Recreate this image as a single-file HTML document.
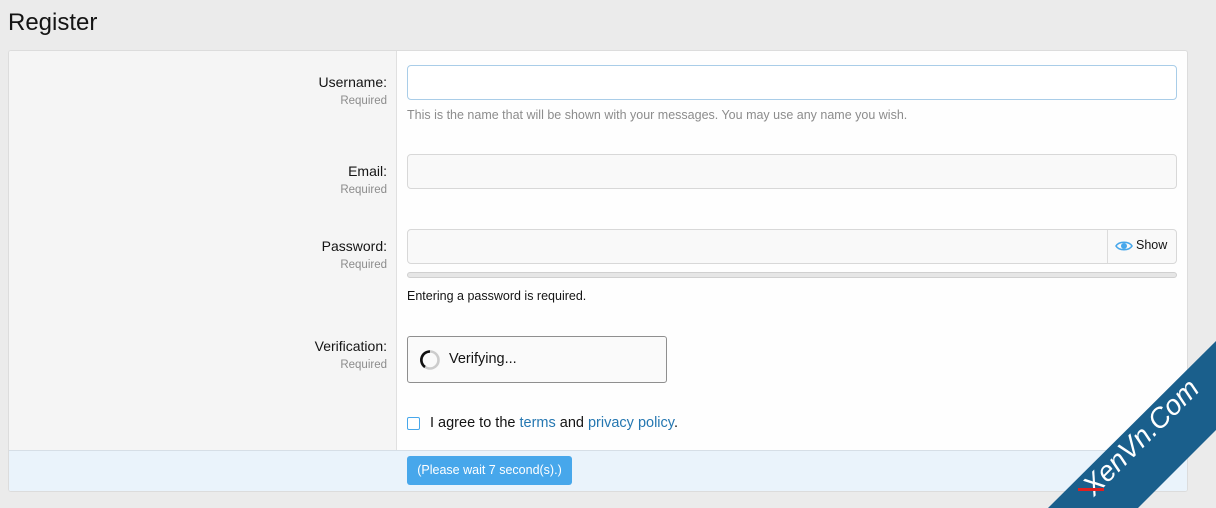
<!DOCTYPE html>
<html><head><meta charset="utf-8"><style>
*{box-sizing:border-box;margin:0;padding:0}
body{width:1216px;height:508px;background:#ebebeb;font-family:"Liberation Sans",sans-serif;position:relative;overflow:hidden;color:#141414}
.a{position:absolute}
h1{position:absolute;left:8px;top:9px;font-weight:400;font-size:24px;color:#141414}
.blk{left:8px;top:50px;width:1180px;height:442px;background:#fefefe;border:1px solid #dcdcdc;border-radius:3px;overflow:hidden}
.left{left:0;top:0;width:388px;height:399px;background:#f5f5f5;border-right:1px solid #e0e0e0}
.foot{left:0;top:399px;width:1180px;height:42px;background:#eaf3fb;border-top:1px solid #d6dee6}
.lbl{right:829px;text-align:right;font-size:14px;color:#141414;width:300px}
.req{right:829px;text-align:right;font-size:11.5px;color:#8c8c8c;width:300px}
.inp{left:407px;width:770px;height:35px;border:1px solid #d8d8d8;border-radius:4px;background:#f9f9f9}
.hint{font-size:12.5px;color:#8c8c8c}
a{color:#2577b1;text-decoration:none}
</style></head><body>
<h1>Register</h1>
<div class="a blk"><div class="a left"></div><div class="a foot"></div></div>

<div class="a lbl" style="top:74px">Username:</div>
<div class="a req" style="top:95px">Required</div>
<div class="a inp" style="top:65px;background:#fff;border-color:#a9cde8"></div>
<div class="a hint" style="left:407px;top:108px">This is the name that will be shown with your messages. You may use any name you wish.</div>

<div class="a lbl" style="top:163px">Email:</div>
<div class="a req" style="top:184px">Required</div>
<div class="a inp" style="top:154px"></div>

<div class="a lbl" style="top:238px">Password:</div>
<div class="a req" style="top:259px">Required</div>
<div class="a inp" style="top:229px"></div>
<div class="a" style="left:1107px;top:230px;width:1px;height:33px;background:#dcdcdc"></div>
<svg class="a" style="left:1115px;top:239px" width="18" height="14" viewBox="0 0 18 14"><path d="M1 7C4 2 14 2 17 7C14 12 4 12 1 7Z" fill="none" stroke="#47a7eb" stroke-width="1.6"/><circle cx="9" cy="7" r="3" fill="#47a7eb"/></svg>
<div class="a" style="left:1136px;top:238px;font-size:12.5px">Show</div>
<div class="a" style="left:407px;top:272px;width:770px;height:6px;border:1px solid #d0d0d0;border-radius:3px;background:#e6e6e6"></div>
<div class="a" style="left:407px;top:289px;font-size:12.5px">Entering a password is required.</div>

<div class="a lbl" style="top:338px">Verification:</div>
<div class="a req" style="top:359px">Required</div>
<div class="a" style="left:407px;top:336px;width:260px;height:47px;border:1px solid #8f8f8f;border-radius:3px;background:#fafafa"></div>
<svg class="a" style="left:419px;top:349px" width="22" height="22" viewBox="0 0 22 22"><circle cx="11" cy="11" r="8.5" fill="none" stroke="#ccc" stroke-width="2.6"/><path d="M11 2.5A8.5 8.5 0 0 0 6 18" fill="none" stroke="#111" stroke-width="2.6"/></svg>
<div class="a" style="left:449px;top:351px;font-size:14.5px">Verifying...</div>

<div class="a" style="left:407px;top:417px;width:13px;height:13px;border:1.5px solid #47a7eb;border-radius:2px;background:#fff"></div>
<div class="a" style="left:430px;top:415px;font-size:14.5px">I agree to the <a>terms</a> and <a>privacy policy</a>.</div>

<div class="a" style="left:407px;top:456px;width:165px;height:29px;background:#47a7eb;border-radius:3px;color:#fff;font-size:12.5px;line-height:29px;text-align:center">(Please wait 7 second(s).)</div>

<svg class="a" style="left:0;top:0" width="1216" height="508"><polygon points="1216,341 1216,430 1138,508 1048,508" fill="#1a5f8c"/>
<text x="0" y="0" transform="translate(1094,497) rotate(-45)" fill="#fff" font-family="Liberation Sans,sans-serif" font-size="28" font-style="italic">XenVn.Com</text>
<rect x="1078" y="488" width="26" height="3" fill="#e02020"/></svg>
</body></html>
